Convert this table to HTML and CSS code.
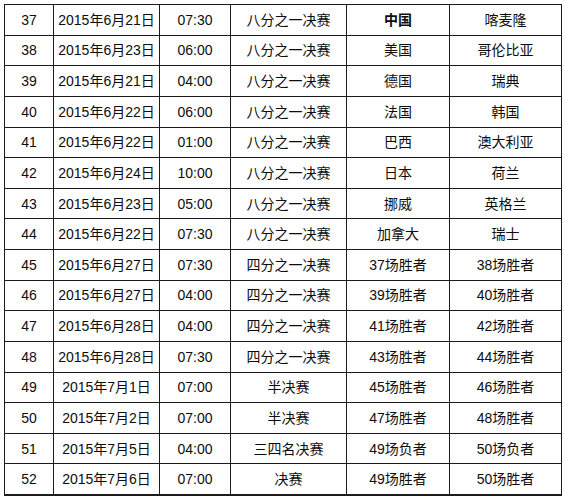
FILE: index.html
```html
<!DOCTYPE html>
<html lang="zh-CN">
<head>
<meta charset="utf-8">
<title>2015年女足世界杯淘汰赛赛程</title>
<link rel="stylesheet" href="styles.css">
</head>
<body>
<table class="schedule">
  <colgroup>
    <col class="c-no"><col class="c-date"><col class="c-time"><col class="c-stage"><col class="c-home"><col class="c-away">
  </colgroup>
  <tbody>
    <tr><td>37</td><td>2015年6月21日</td><td>07:30</td><td>八分之一决赛</td><td class="bold">中国</td><td>喀麦隆</td></tr>
    <tr><td>38</td><td>2015年6月23日</td><td>06:00</td><td>八分之一决赛</td><td>美国</td><td>哥伦比亚</td></tr>
    <tr><td>39</td><td>2015年6月21日</td><td>04:00</td><td>八分之一决赛</td><td>德国</td><td>瑞典</td></tr>
    <tr><td>40</td><td>2015年6月22日</td><td>06:00</td><td>八分之一决赛</td><td>法国</td><td>韩国</td></tr>
    <tr><td>41</td><td>2015年6月22日</td><td>01:00</td><td>八分之一决赛</td><td>巴西</td><td>澳大利亚</td></tr>
    <tr><td>42</td><td>2015年6月24日</td><td>10:00</td><td>八分之一决赛</td><td>日本</td><td>荷兰</td></tr>
    <tr><td>43</td><td>2015年6月23日</td><td>05:00</td><td>八分之一决赛</td><td>挪威</td><td>英格兰</td></tr>
    <tr><td>44</td><td>2015年6月22日</td><td>07:30</td><td>八分之一决赛</td><td>加拿大</td><td>瑞士</td></tr>
    <tr><td>45</td><td>2015年6月27日</td><td>07:30</td><td>四分之一决赛</td><td>37场胜者</td><td>38场胜者</td></tr>
    <tr><td>46</td><td>2015年6月27日</td><td>04:00</td><td>四分之一决赛</td><td>39场胜者</td><td>40场胜者</td></tr>
    <tr><td>47</td><td>2015年6月28日</td><td>04:00</td><td>四分之一决赛</td><td>41场胜者</td><td>42场胜者</td></tr>
    <tr><td>48</td><td>2015年6月28日</td><td>07:30</td><td>四分之一决赛</td><td>43场胜者</td><td>44场胜者</td></tr>
    <tr><td>49</td><td>2015年7月1日</td><td>07:00</td><td>半决赛</td><td>45场胜者</td><td>46场胜者</td></tr>
    <tr><td>50</td><td>2015年7月2日</td><td>07:00</td><td>半决赛</td><td>47场胜者</td><td>48场胜者</td></tr>
    <tr><td>51</td><td>2015年7月5日</td><td>04:00</td><td>三四名决赛</td><td>49场负者</td><td>50场负者</td></tr>
    <tr><td>52</td><td>2015年7月6日</td><td>07:00</td><td>决赛</td><td>49场胜者</td><td>50场胜者</td></tr>
  </tbody>
</table>
</body>
</html>
```

FILE: styles.css
```css
html, body {
  margin: 0;
  padding: 0;
  background: #ffffff;
}

body {
  padding: 4px 0 0 4px;
}

.schedule {
  border-collapse: collapse;
  table-layout: fixed;
  width: 557px;
  font-family: "Liberation Sans", "Noto Sans CJK SC", sans-serif;
  font-size: 14px;
  color: #0d0d0d;
}

.c-no { width: 49px; }
.c-date { width: 106px; }
.c-time { width: 71px; }
.c-stage { width: 116px; }
.c-home { width: 103px; }
.c-away { width: 112px; }

.schedule tr {
  height: 30.625px;
}

.schedule td {
  border: 1px solid #1c1c1c;
  padding: 0;
  text-align: center;
  vertical-align: middle;
  white-space: nowrap;
  line-height: 16px;
}

.schedule tr:last-child td {
  border-bottom-width: 2px;
}

.bold {
  font-weight: bold;
}
```
